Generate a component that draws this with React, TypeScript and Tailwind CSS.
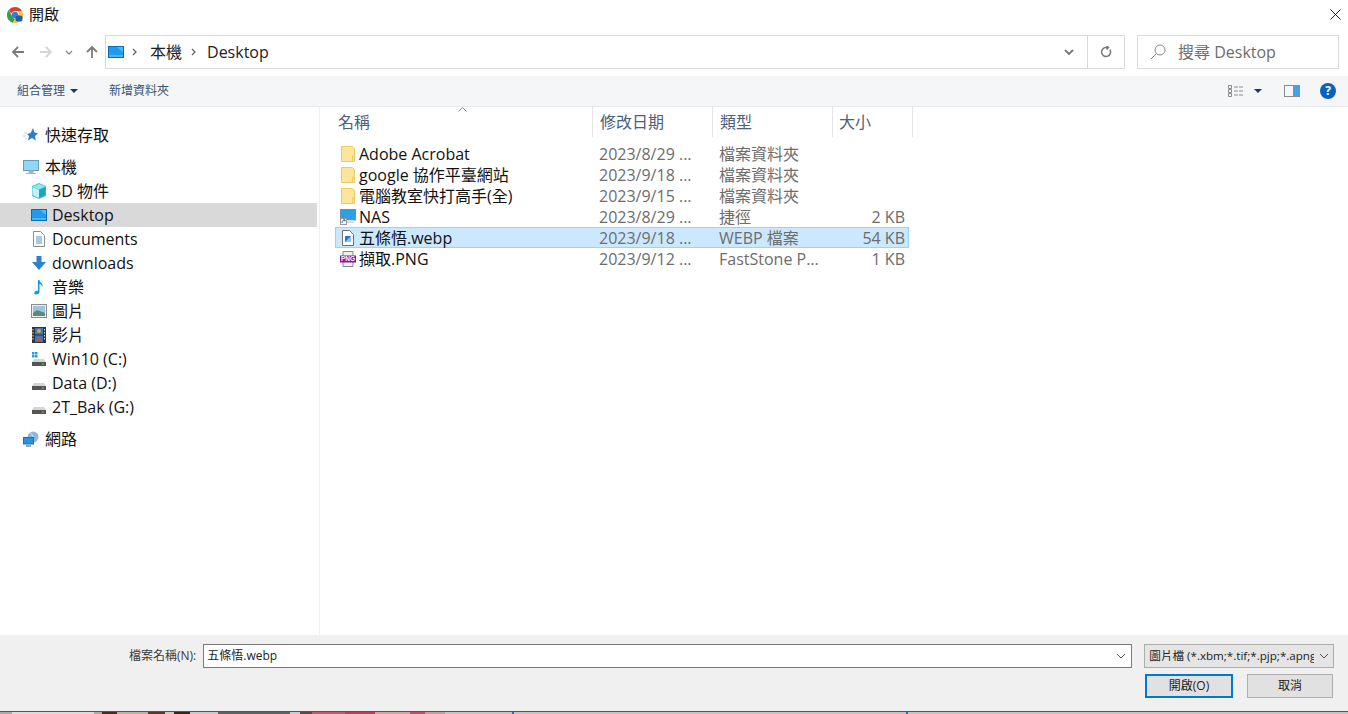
import type { ReactNode } from "react";

const uiFont = "font-['Open_Sans','Noto_Sans_CJK_TC',sans-serif]";

function DesktopIcon({ className = "" }: { className?: string }) {
  return (
    <svg viewBox="0 0 16 12" className={className}>
      <rect x="0.5" y="0.5" width="15" height="11" fill="#1e9bf0" stroke="#0a6cb4" />
      <path d="M1 10h14" stroke="#7fd0fa" />
      <path d="M9 1h6v5z" fill="#56b8f7" />
    </svg>
  );
}

function Drive({ win = false }: { win?: boolean }) {
  return (
    <svg viewBox="0 0 16 16" className="h-4 w-4">
      {win && (
        <g fill="#1ba1e2">
          <rect x="1" y="1" width="2.5" height="2.5" />
          <rect x="4" y="1" width="2.5" height="2.5" />
          <rect x="1" y="4" width="2.5" height="2.5" />
          <rect x="4" y="4" width="2.5" height="2.5" />
        </g>
      )}
      <path d="M3 8h10l2 3H1z" fill="#d5d5d5" />
      <rect x="1" y="11" width="14" height="4" fill="#555" />
      <rect x="11" y="12.5" width="2" height="1" fill="#5fe04a" />
    </svg>
  );
}

function FolderIcon() {
  return (
    <svg viewBox="0 0 14 16" className="h-4 w-[14px]">
      <path d="M.5.5h11l2 2v13H.5z" fill="#ffe59c" stroke="#eccb62" />
      <path d="M11.5 15V10h2" fill="none" stroke="#eccb62" />
    </svg>
  );
}

const quickIcon = (
  <svg viewBox="0 0 16 16" className="h-4 w-4">
    <path d="M10 1l1.4 4.2L15 6.5l-3 2.6.8 4.4L9 11l-4 2.5 1-4.5L4 7l3.6-1z" fill="#2f7fc4" />
    <path d="M1 6h3M0 9h3M2 12h2" stroke="#a9d3f2" />
  </svg>
);

const pcIcon = (
  <svg viewBox="0 0 16 16" className="h-4 w-4">
    <rect x="0.5" y="1.5" width="15" height="10" fill="#8fd6f7" stroke="#6a9ab5" />
    <path d="M6 12h4v2H6zM3 14.5h10" fill="#9db4c2" stroke="#9db4c2" />
  </svg>
);

const cubeIcon = (
  <svg viewBox="0 0 16 16" className="h-4 w-4">
    <path d="M8 0l7 3v10l-7 3-7-3V3z" fill="#3fc4d6" />
    <path d="M8 1l6.500 2.500L8 6.500 1.500 3.500z" fill="#8fe6ef" />
    <path d="M1.500 4L8 7v8L1.500 12z" fill="#c4f0f2" />
    <path d="M14.500 4L8 7v8l6.500-3z" fill="#1fa5b8" />
  </svg>
);

const docIcon = (
  <svg viewBox="0 0 14 16" className="h-4 w-[14px]">
    <path d="M1.500.5h7l4 4v11h-11z" fill="#fff" stroke="#8d8d8d" />
    <path d="M4 6h6M4 8h6M4 10h6M4 12h6" stroke="#4c93c9" />
  </svg>
);

const downIcon = (
  <svg viewBox="0 0 16 16" className="h-4 w-4">
    <path d="M5.500 1h5v6H15l-7 8-7-8h4.500z" fill="#2f7fd0" />
  </svg>
);

const musicIcon = (
  <svg viewBox="0 0 16 16" className="h-4 w-4">
    <path d="M7 1h1.500c.3 3 4 3.500 3 7-.5-2-2-2.800-3-3v8c0 1.500-1.500 2.500-3.500 2.500S3 14.500 3.500 13.300 5.500 11.500 7 12z" fill="#139be6" />
  </svg>
);

const pictureIcon = (
  <svg viewBox="0 0 16 14" className="h-[14px] w-4">
    <rect x="0.5" y="0.5" width="15" height="13" fill="#eee" stroke="#8c8c8c" />
    <rect x="2" y="2" width="12" height="10" fill="#9cc6de" />
    <path d="M2 9l4-3 8 3v3H2z" fill="#5a8a7a" />
  </svg>
);

const filmIcon = (
  <svg viewBox="0 0 14 16" className="h-4 w-[14px]">
    <rect width="14" height="16" fill="#333" />
    <rect x="3" y="1" width="8" height="6.500" fill="#3f74c4" />
    <rect x="3" y="8.500" width="8" height="6.500" fill="#3f74c4" />
    <circle cx="7" cy="4" r="2" fill="#d8b02c" />
    <circle cx="7" cy="12" r="2" fill="#c4582c" />
    <path d="M1 2v12" stroke="#ddd" strokeDasharray="1.500 1.500" />
    <path d="M12.500 2v12" stroke="#ddd" strokeDasharray="1.500 1.500" />
  </svg>
);

const networkIcon = (
  <svg viewBox="0 0 16 16" className="h-4 w-4">
    <circle cx="10" cy="6" r="5.500" fill="#8fb8da" />
    <path d="M7 2c3 1 4 5 3 9" stroke="#d5e6f2" fill="none" />
    <rect x="0.500" y="6.500" width="10" height="6.500" fill="#2b93dc" stroke="#1f6fa8" />
    <path d="M3 15h5" stroke="#6a8da8" strokeWidth="1.500" />
  </svg>
);

type NavItem = { label: string; icon: ReactNode; inset?: boolean; active?: boolean };

const thisPcItems: NavItem[] = [
  { label: "3D 物件", icon: cubeIcon, inset: true },
  { label: "Desktop", icon: <DesktopIcon className="h-3 w-4" />, inset: true, active: true },
  { label: "Documents", icon: docIcon, inset: true },
  { label: "downloads", icon: downIcon, inset: true },
  { label: "音樂", icon: musicIcon, inset: true },
  { label: "圖片", icon: pictureIcon, inset: true },
  { label: "影片", icon: filmIcon, inset: true },
  { label: "Win10 (C:)", icon: <Drive win />, inset: true },
  { label: "Data (D:)", icon: <Drive />, inset: true },
  { label: "2T_Bak (G:)", icon: <Drive />, inset: true },
];

function NavRow({ label, icon, inset, active }: NavItem) {
  return (
    <div className={`flex h-6 items-center text-[16px] text-[#111] ${active ? "bg-[#d9d9d9]" : ""} ${inset ? "pl-[31px]" : "pl-[23px]"}`}>
      <span className="flex w-4 justify-center">{icon}</span>
      <span className={inset ? "ml-[5px]" : "ml-[6px]"}>{label}</span>
    </div>
  );
}

type FileRow = { name: string; date: string; type: string; size?: string; icon: ReactNode; selected?: boolean };

const files: FileRow[] = [
  { name: "Adobe Acrobat", date: "2023/8/29 ...", type: "檔案資料夾", icon: <FolderIcon /> },
  { name: "google 協作平臺網站", date: "2023/9/18 ...", type: "檔案資料夾", icon: <FolderIcon /> },
  { name: "電腦教室快打高手(全)", date: "2023/9/15 ...", type: "檔案資料夾", icon: <FolderIcon /> },
  {
    name: "NAS",
    date: "2023/8/29 ...",
    type: "捷徑",
    size: "2 KB",
    icon: (
      <svg viewBox="0 0 16 16" className="h-4 w-4">
        <rect x="0.500" y="0.500" width="15" height="10.500" fill="#2b9fe8" stroke="#6f8ea3" />
        <path d="M2 11h12v3H2z" fill="#d3dde4" />
        <rect x="0.500" y="9.500" width="6" height="6" fill="#fff" stroke="#999" />
        <path d="M2 14c0-2 1-3 3-3M3.500 10.800H5v1.500" fill="none" stroke="#1f5fb0" />
      </svg>
    ),
  },
  {
    name: "五條悟.webp",
    date: "2023/9/18 ...",
    type: "WEBP 檔案",
    size: "54 KB",
    selected: true,
    icon: (
      <svg viewBox="0 0 14 16" className="h-4 w-[14px]">
        <path d="M1.500.5h7l4 4v11h-11z" fill="#fff" stroke="#6e6e6e" />
        <rect x="4" y="6" width="6" height="6" fill="#2b74c4" />
        <path d="M4 12l6-6v6z" fill="#8fc4ee" />
      </svg>
    ),
  },
  {
    name: "擷取.PNG",
    date: "2023/9/12 ...",
    type: "FastStone P...",
    size: "1 KB",
    icon: (
      <svg viewBox="0 0 16 16" className="h-4 w-4">
        <path d="M3 .5h10v15H3z" fill="#eee" stroke="#888" />
        <rect y="4.500" width="16" height="7" fill="#8e149e" />
        <text x="8" y="10.300" textAnchor="middle" fontSize="6.500" fontWeight="700" fill="#fff" fontFamily="Liberation Sans">PNG</text>
      </svg>
    ),
  },
];

function ColumnHeader({ label, width }: { label: string; width: string }) {
  return (
    <div className={`flex h-[30px] items-center border-r border-[#e5e5e5] text-[16px] text-[#4c607a] ${width}`}>
      {label}
    </div>
  );
}

export default function App() {
  return (
    <div className={`flex h-[714px] w-[1348px] flex-col overflow-hidden bg-white ${uiFont}`}>
      {/* title bar */}
      <div className="flex h-[29px] items-center pl-[7px] pr-[7px]">
        <svg viewBox="0 0 16 16" className="h-4 w-4">
          <path d="M8 0a8 8 0 0 1 6.900 4H8a4 4 0 0 0-3.700 2.500L1.700 2.900A8 8 0 0 1 8 0z" fill="#e33b2e" />
          <path d="M1.700 2.900l3.400 6.100A4 4 0 0 0 8 12l-2.200 3.700A8 8 0 0 1 1.700 2.900z" fill="#2fa24d" />
          <path d="M14.900 4A8 8 0 0 1 5.800 15.700L9.300 10a4 4 0 0 0 1.500-6z" fill="#fbc02d" />
          <circle cx="8" cy="8" r="3.200" fill="#2f7fe0" />
          <rect x="8.500" y="8.500" width="7" height="6" rx="2" fill="#1f5fa8" />
        </svg>
        <span className="ml-[6px] text-[15px] text-[#111]">開啟</span>
        <svg viewBox="0 0 12 12" className="ml-auto h-[11px] w-[11px]" stroke="#111" strokeWidth="1">
          <path d="M.5.5l11 11M11.500.5l-11 11" />
        </svg>
      </div>

      {/* navigation row */}
      <div className="mt-[6px] flex h-[34px] items-center">
        <div className="flex w-[105px] items-center text-[#777]">
          <svg viewBox="0 0 14 14" className="ml-[11px] h-[14px] w-[14px]" fill="none" stroke="#7a7a7a" strokeWidth="1.800">
            <path d="M13 7H2M7 2L2 7l5 5" />
          </svg>
          <svg viewBox="0 0 14 14" className="ml-[14px] h-[14px] w-[14px]" fill="none" stroke="#d5d5d5" strokeWidth="1.800">
            <path d="M1 7h11M7 2l5 5-5 5" />
          </svg>
          <svg viewBox="0 0 8 5" className="ml-[12px] h-[5px] w-2" fill="none" stroke="#8a8a8a" strokeWidth="1.300">
            <path d="M1 1l3 3 3-3" />
          </svg>
          <svg viewBox="0 0 14 14" className="ml-[12px] h-[14px] w-[14px]" fill="none" stroke="#7a7a7a" strokeWidth="1.800">
            <path d="M7 13V2M2 7l5-5 5 5" />
          </svg>
        </div>
        <div className="flex h-[34px] w-[1020px] items-center border border-[#d9d9d9] text-[16px] text-[#222]">
          <DesktopIcon className="ml-[2px] h-3 w-4" />
          <Chevron className="ml-[8px]" />
          <span className="ml-[13px]">本機</span>
          <Chevron className="ml-[9px]" />
          <span className="ml-[11px]">Desktop</span>
          <span className="ml-auto flex h-full w-[38px] items-center justify-center border-r border-[#d9d9d9]">
            <svg viewBox="0 0 10 6" className="h-[6px] w-[10px]" fill="none" stroke="#777" strokeWidth="1.800">
              <path d="M1 1l4 4 4-4" />
            </svg>
          </span>
          <span className="flex w-[36px] items-center justify-center">
            <svg viewBox="0 0 12 12" className="h-3 w-3" fill="none" stroke="#777" strokeWidth="1.500">
              <path d="M9.800 3.500A4.500 4.500 0 1 1 6 1.500H8M6.500 0L8.500 1.500 6.500 3.500" />
            </svg>
          </span>
        </div>
        <div className="ml-3 flex h-[34px] w-[202px] items-center border border-[#d9d9d9] text-[16px] text-[#6d6d6d]">
          <svg viewBox="0 0 16 16" className="ml-[12px] h-4 w-4" fill="none" stroke="#8a8a8a">
            <circle cx="10" cy="6" r="5" />
            <path d="M6.500 9.500L1 15" />
          </svg>
          <span className="ml-[12px]">搜尋 Desktop</span>
        </div>
      </div>

      {/* command bar */}
      <div className="mt-[7px] flex h-[31px] items-center border-b border-[#e8e8e8] bg-[#f5f6f7] text-[12px] text-[#3c5272]">
        <span className="ml-[17px]">組合管理</span>
        <span className="ml-[5px] h-0 w-0 border-x-[4px] border-t-[4px] border-x-transparent border-t-[#1e3a5f]" />
        <span className="ml-[31px]">新增資料夾</span>
        <svg viewBox="0 0 16 12" className="ml-auto h-3 w-4" fill="none" stroke="#8c8c8c">
          <path d="M.5.500h3v3h-3zM.5 4.500h3v3h-3zM.5 8.500h3v3h-3z" />
          <path d="M6 2h4M11 2h4M6 6h4M11 6h4M6 10h4M11 10h4" />
        </svg>
        <span className="ml-[10px] h-0 w-0 border-x-[4px] border-t-[4px] border-x-transparent border-t-[#1e3a5f]" />
        <span className="ml-[22px] flex h-3 w-4 border border-[#8c8c8c] bg-[#f5f6f7]">
          <span className="ml-auto h-full w-[6px] bg-[#4a9fe0]" />
        </span>
        <span className="ml-[20px] mr-3 flex h-4 w-4 items-center justify-center rounded-full bg-[#0a62bf] text-[12px] font-bold text-white">
          ?
        </span>
      </div>

      {/* navigation pane and file list */}
      <div className="flex min-h-0 flex-1">
        <aside className="w-[320px] shrink-0 border-r border-[#efefef] pr-[2px] pt-4">
          <NavRow label="快速存取" icon={quickIcon} />
          <div className="mt-2">
            <NavRow label="本機" icon={pcIcon} />
            {thisPcItems.map((item) => (
              <NavRow key={item.label} {...item} />
            ))}
          </div>
          <div className="mt-2">
            <NavRow label="網路" icon={networkIcon} />
          </div>
        </aside>

        <main className="relative flex-1">
          <svg viewBox="0 0 9 5" className="absolute left-[138px] top-0 h-[5px] w-[9px]" fill="none" stroke="#888">
            <path d="M.5 4.500L4.500.5l4 4" />
          </svg>
          <div className="flex">
            <ColumnHeader label="名稱" width="w-[273px] pl-[18px]" />
            <ColumnHeader label="修改日期" width="w-[120px] pl-[7px]" />
            <ColumnHeader label="類型" width="w-[120px] pl-[7px]" />
            <ColumnHeader label="大小" width="w-[80px] pl-[6px]" />
          </div>
          <div className="ml-[15px] mt-[6px] w-[574px]">
            {files.map((file) => (
              <div
                key={file.name}
                className={`flex h-[21px] items-center border text-[16px] ${file.selected ? "border-[#99d1ff] bg-[#cce8ff]" : "border-transparent"}`}
              >
                <span className="flex w-[21px] justify-center pl-[3px]">{file.icon}</span>
                <span className="ml-[2px] w-[240px] text-[#111]">{file.name}</span>
                <span className="w-[120px] text-[#6d6d6d]">{file.date}</span>
                <span className="w-[109px] text-[#6d6d6d]">{file.type}</span>
                <span className="w-[80px] pr-[3px] text-right text-[#6d6d6d]">{file.size}</span>
              </div>
            ))}
          </div>
        </main>
      </div>

      {/* file name, type filter and buttons */}
      <footer className="h-[76px] shrink-0 bg-[#f0f0f0] text-[12px] text-[#222]">
        <div className="flex h-[33px] items-end">
          <span className="ml-[129px] flex h-[24px] items-center text-[#3a3a3a]">檔案名稱(N):</span>
          <div className="ml-[7px] flex h-[24px] w-[929px] items-center border border-[#7a7a7a] bg-white pl-[3px] text-[12px]">
            五條悟.webp
            <Chevron2 className="ml-auto mr-[5px]" />
          </div>
          <div className="ml-[12px] flex h-[24px] w-[190px] items-center border border-[#adadad] bg-[#e5e5e5] pl-[4px] text-[11.6px]">
            <span className="w-[165px] overflow-hidden whitespace-nowrap">圖片檔 (*.xbm;*.tif;*.pjp;*.apng</span>
            <Chevron2 className="ml-[5px]" />
          </div>
        </div>
        <div className="mt-[6px] flex justify-end">
          <button className="flex h-[24px] w-[88px] items-center justify-center border-2 border-[#0078d7] bg-[#e1e1e1]">
            開啟(O)
          </button>
          <button className="ml-[14px] mr-[15px] flex h-[24px] w-[86px] items-center justify-center border border-[#adadad] bg-[#e1e1e1]">
            取消
          </button>
        </div>
      </footer>

      {/* edge of the window behind the dialog */}
      <div className="flex h-[3px] shrink-0 border-t border-[#555] bg-[#c4c4c4]">
        <span className="w-[12px] bg-[#aaa]" />
        <span className="w-[82px] bg-[#dcdcdc]" />
        <span className="w-[8px] bg-[#b5ab9c]" />
        <span className="w-[15px] bg-[#4a2c18]" />
        <span className="w-[31px] bg-[#b9b5a4]" />
        <span className="w-[17px] bg-[#5c3a20]" />
        <span className="w-[9px] bg-[#d0ccc0]" />
        <span className="w-[16px] bg-[#3a2414]" />
        <span className="w-[28px] bg-[#c5ccd0]" />
        <span className="w-[72px] bg-[#566668]" />
        <span className="w-[10px] bg-[#c5d0d5]" />
        <span className="w-[12px] bg-[#5c4a48]" />
        <span className="w-[33px] bg-[#c05a70]" />
        <span className="w-[30px] bg-[#c43a58]" />
        <span className="w-[35px] bg-[#c9a9a0]" />
        <span className="w-[15px] bg-[#c0506a]" />
        <span className="w-[20px] bg-[#c0a0a0]" />
        <span className="ml-[67px] w-[2px] bg-[#1f6fd0]" />
        <span className="ml-[392px] w-[2px] bg-[#1f6fd0]" />
      </div>
    </div>
  );
}

function Chevron({ className = "" }: { className?: string }) {
  return (
    <svg viewBox="0 0 5 8" className={`h-2 w-[5px] ${className}`} fill="none" stroke="#666" strokeWidth="1.300">
      <path d="M1 1l3 3-3 3" />
    </svg>
  );
}

function Chevron2({ className = "" }: { className?: string }) {
  return (
    <svg viewBox="0 0 10 6" className={`h-[6px] w-[10px] ${className}`} fill="none" stroke="#555">
      <path d="M1 1l4 4 4-4" />
    </svg>
  );
}
